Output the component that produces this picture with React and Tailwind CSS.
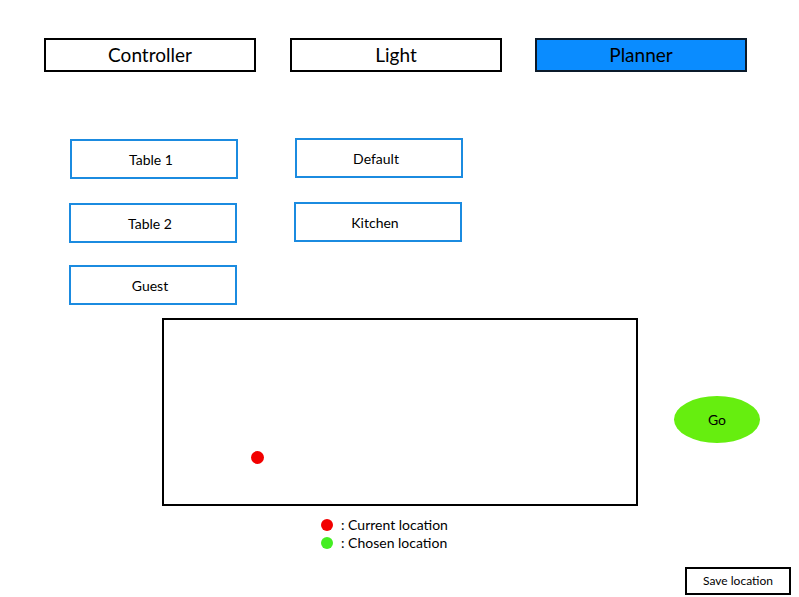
const tabs = [
  { label: 'Controller', active: false, gap: 'ml-0' },
  { label: 'Light', active: false, gap: 'ml-[34px]' },
  { label: 'Planner', active: true, gap: 'ml-[33px]' },
]

function OptionButton({ label, className = '' }) {
  return (
    <button
      className={`w-[168px] h-[40px] border-2 border-[#1b8be0] bg-white text-[14px] text-black flex items-center justify-center pr-[6px] ${className}`}
    >
      {label}
    </button>
  )
}

export default function App() {
  return (
    <div
      className="w-[799px] h-[597px] bg-white text-black overflow-hidden flex flex-col"
      style={{ fontFamily: 'Lato, "Open Sans", sans-serif' }}
    >
      {/* Tabs */}
      <div className="flex pt-[38px] pl-[44px]">
        {tabs.map((t) => (
          <div
            key={t.label}
            className={`${t.gap} w-[212px] h-[34px] border-2 flex items-center justify-center text-[19px] ${
              t.active ? 'bg-[#0a8cff] border-[#0b1a2a]' : 'bg-white border-black'
            }`}
          >
            {t.label}
          </div>
        ))}
      </div>

      {/* Locations */}
      <div className="grid grid-cols-[168px_168px] gap-x-[57px] gap-y-[24px] pl-[70px] mt-[67px]">
        <OptionButton label="Table 1" />
        <OptionButton label="Default" className="-mt-px" />
        <OptionButton label="Table 2" className="-ml-px" />
        <OptionButton label="Kitchen" className="-ml-px -mt-px" />
        <OptionButton label="Guest" className="-ml-px -mt-[2px]" />
      </div>

      {/* Map + Go */}
      <div className="flex items-start mt-[13px] pl-[162px]">
        <div className="relative w-[476px] h-[188px] border-2 border-black">
          <span className="absolute left-[87px] top-[131px] w-[13px] h-[13px] rounded-full bg-[#f20000]" />
        </div>
        <button className="ml-[36px] mt-[78px] w-[86px] h-[47px] rounded-[50%] bg-[#66ee0f] text-[14px] flex items-center justify-center">
          Go
        </button>
      </div>

      {/* Legend */}
      <div className="flex flex-col pl-[321px] mt-[10px] text-[14px] leading-[18px]">
        <div className="flex items-center gap-[8px]">
          <span className="w-[12px] h-[12px] rounded-full bg-[#f20000]" />
          <span>: Current location</span>
        </div>
        <div className="flex items-center gap-[8px]">
          <span className="w-[12px] h-[12px] rounded-full bg-[#44ee22]" />
          <span>: Chosen location</span>
        </div>
      </div>

      {/* Save */}
      <div className="flex justify-end pr-[8px] mt-[15px]">
        <button className="w-[106px] h-[28px] border-2 border-black bg-white text-[12px] flex items-center justify-center">
          Save location
        </button>
      </div>
    </div>
  )
}
